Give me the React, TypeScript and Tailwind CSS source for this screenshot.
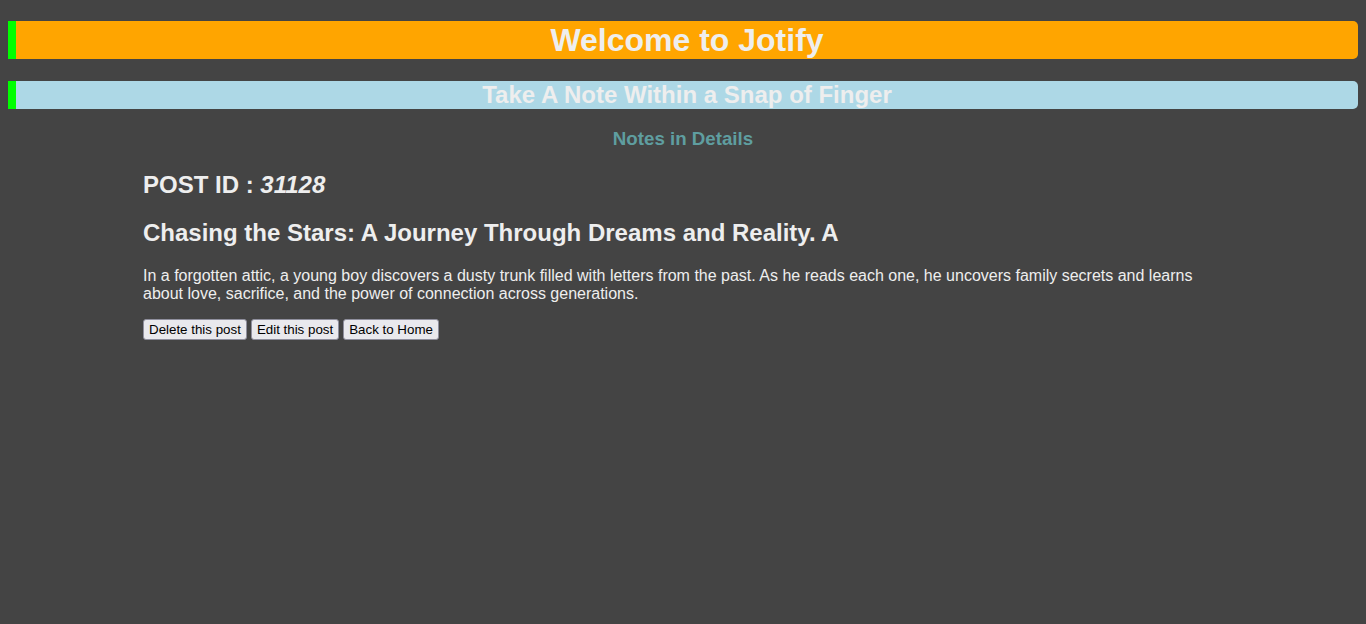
import React from "react";

const post = {
  id: 31128,
  title: "Chasing the Stars: A Journey Through Dreams and Reality. A",
  body: "In a forgotten attic, a young boy discovers a dusty trunk filled with letters from the past. As he reads each one, he uncovers family secrets and learns about love, sacrifice, and the power of connection across generations.",
};

export default function App() {
  return (
    <div className="min-h-[624px] bg-[#444444] p-2 text-[#eeeeee] font-['Liberation_Sans',Arial,sans-serif]">
      {/* Header */}
      <h1 className="mt-[13px] h-[38px] rounded-r-[5px] border-l-8 border-[#00ff00] bg-[#ffa500] text-center text-[32px] font-bold leading-[38px]">
        Welcome to Jotify
      </h1>
      <h2 className="mt-[22px] h-[28px] rounded-r-[5px] border-l-8 border-[#00ff00] bg-[#add8e6] text-center text-[24px] font-bold leading-[28px]">
        Take A Note Within a Snap of Finger
      </h2>

      <h3 className="mt-[19px] text-center text-[18.72px] font-bold leading-[21.5px] text-[#5f9ea0]">
        Notes in Details
      </h3>

      {/* Post details */}
      <div className="mx-auto w-[80%]">
        <h2 className="mt-[21px] text-[24px] font-bold leading-[27.6px]">
          POST ID : <em>{post.id}</em>
        </h2>
        <h2 className="mt-[21px] text-[24px] font-bold leading-[27.6px]">
          {post.title}
        </h2>
        <p className="mt-[20px] text-[16px] leading-[18.4px]">{post.body}</p>
        <div className="mt-[15px] flex gap-1">
          <button className="h-[21px] rounded-[3px] border border-[#8f8f9d] bg-[#e9e9ed] px-[5px] text-[13.33px] leading-[19px] text-black">
            Delete this post
          </button>
          <button className="h-[21px] rounded-[3px] border border-[#8f8f9d] bg-[#e9e9ed] px-[5px] text-[13.33px] leading-[19px] text-black">
            Edit this post
          </button>
          <button className="h-[21px] rounded-[3px] border border-[#8f8f9d] bg-[#e9e9ed] px-[5px] text-[13.33px] leading-[19px] text-black">
            Back to Home
          </button>
        </div>
      </div>
    </div>
  );
}
